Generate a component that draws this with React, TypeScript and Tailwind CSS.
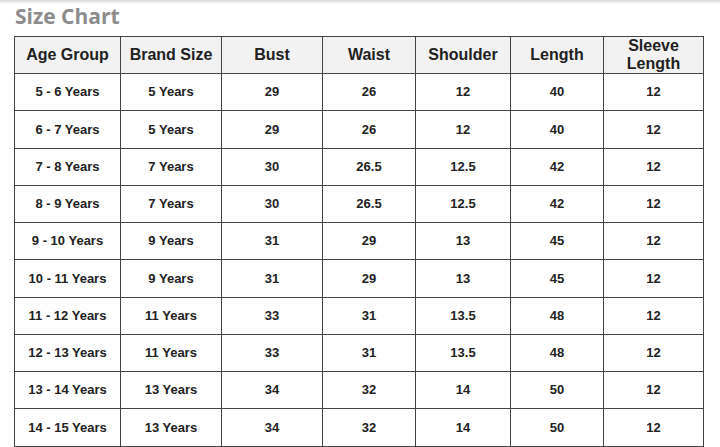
import React from "react";

const rows = [
  ["5 - 6 Years", "5 Years", "29", "26", "12", "40", "12"],
  ["6 - 7 Years", "5 Years", "29", "26", "12", "40", "12"],
  ["7 - 8 Years", "7 Years", "30", "26.5", "12.5", "42", "12"],
  ["8 - 9 Years", "7 Years", "30", "26.5", "12.5", "42", "12"],
  ["9 - 10 Years", "9 Years", "31", "29", "13", "45", "12"],
  ["10 - 11 Years", "9 Years", "31", "29", "13", "45", "12"],
  ["11 - 12 Years", "11 Years", "33", "31", "13.5", "48", "12"],
  ["12 - 13 Years", "11 Years", "33", "31", "13.5", "48", "12"],
  ["13 - 14 Years", "13 Years", "34", "32", "14", "50", "12"],
  ["14 - 15 Years", "13 Years", "34", "32", "14", "50", "12"],
];

const widths = ["w-[106px]", "w-[101px]", "w-[101px]", "w-[93px]", "w-[95px]", "w-[93px]", "w-[100px]"];

export default function App() {
  return (
    <div className="w-[720px] h-[447px] bg-white overflow-hidden relative">
      <div className="h-[4px] bg-gradient-to-b from-[#d9d9d9] to-white" />
      <div className="pl-[15px] h-[32px] flex items-start">
        <h1
          className="text-[21px] leading-[24px] font-bold text-[#8c8c8c]"
          style={{ fontFamily: '"Open Sans", sans-serif' }}
        >
          Size Chart
        </h1>
      </div>
      <table
        className="ml-[14px] border-collapse table-fixed text-[#222]"
        style={{ fontFamily: '"Liberation Sans", Arial, sans-serif' }}
      >
        <thead>
          <tr className="h-[37px] bg-[#f2f2f2]">
            {["Age Group", "Brand Size", "Bust", "Waist", "Shoulder", "Length", "Sleeve Length"].map((h, i) => (
              <th
                key={h}
                className={`${widths[i]} border border-[#444] text-[16px] leading-[18px] font-bold text-center align-middle p-0 ${
                  i === 6 ? "px-[20px]" : ""
                }`}
              >
                {h}
              </th>
            ))}
          </tr>
        </thead>
        <tbody>
          {rows.map((r, ri) => (
            <tr key={ri} className="h-[37.25px]">
              {r.map((c, ci) => (
                <td
                  key={ci}
                  className="border border-[#444] text-[13px] font-bold text-center align-middle p-0"
                >
                  {c}
                </td>
              ))}
            </tr>
          ))}
        </tbody>
      </table>
    </div>
  );
}
